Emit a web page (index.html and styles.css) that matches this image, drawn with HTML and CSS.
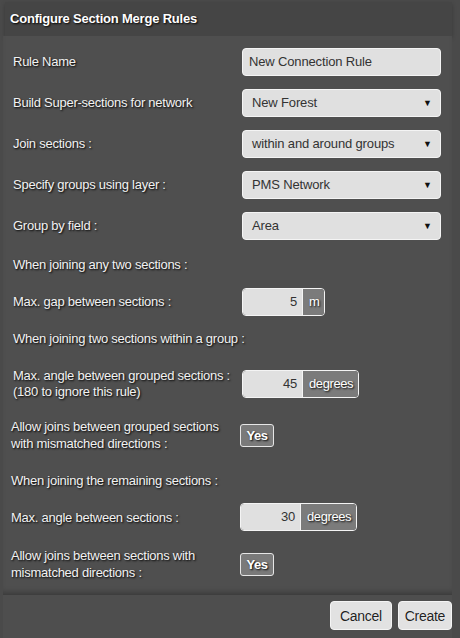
FILE: index.html
```html
<!DOCTYPE html>
<html>
<head>
<meta charset="utf-8">
<link rel="stylesheet" href="styles.css">
</head>
<body>
<div class="dialog">
  <div class="title">Configure Section Merge Rules</div>
  <div class="content">
    <div class="row r41">
      <div class="label">Rule Name</div>
      <div class="field text">New Connection Rule</div>
    </div>
    <div class="row r41">
      <div class="label">Build Super-sections for network</div>
      <div class="field select"><span>New Forest</span><span class="arrow">&#9660;</span></div>
    </div>
    <div class="row r41">
      <div class="label">Join sections :</div>
      <div class="field select"><span>within and around groups</span><span class="arrow">&#9660;</span></div>
    </div>
    <div class="row r41">
      <div class="label">Specify groups using layer :</div>
      <div class="field select"><span>PMS Network</span><span class="arrow">&#9660;</span></div>
    </div>
    <div class="row r41">
      <div class="label">Group by field :</div>
      <div class="field select"><span>Area</span><span class="arrow">&#9660;</span></div>
    </div>
    <div class="row r38">
      <div class="label">When joining any two sections :</div>
    </div>
    <div class="row r36">
      <div class="label">Max. gap between sections :</div>
      <div class="numbox"><span class="num">5</span><span class="unit">m</span></div>
    </div>
    <div class="row r38">
      <div class="label">When joining two sections within a group :</div>
    </div>
    <div class="row r52">
      <div class="label">Max. angle between grouped sections :<br>(180 to ignore this rule)</div>
      <div class="numbox"><span class="num">45</span><span class="unit">degrees</span></div>
    </div>
    <div class="row r50">
      <div class="label tight">Allow joins between grouped sections<br>with mismatched directions :</div>
      <div class="toggle">Yes</div>
    </div>
    <div class="row r40">
      <div class="label tight">When joining the remaining sections :</div>
    </div>
    <div class="row r34">
      <div class="label tight">Max. angle between sections :</div>
      <div class="numbox"><span class="num">30</span><span class="unit">degrees</span></div>
    </div>
    <div class="row r60">
      <div class="label tight">Allow joins between sections with<br>mismatched directions :</div>
      <div class="toggle">Yes</div>
    </div>
  </div>
  <div class="footer">
    <button class="btn btn-cancel">Cancel</button>
    <button class="btn">Create</button>
  </div>
</div>
</body>
</html>
```
FILE: styles.css
```css
html, body {
  margin: 0;
  padding: 0;
}
body {
  background: #4a4a4a;
  width: 460px;
  height: 638px;
  overflow: hidden;
  font-family: "Liberation Sans", Arial, sans-serif;
  font-size: 13px;
  color: #f2f2f2;
}
.dialog {
  margin-left: 3px;
  width: 449px;
  display: flex;
  flex-direction: column;
}
.title {
  margin: 2px 0 0 2px;
  height: 34px;
  line-height: 34px;
  padding-left: 5px;
  background: #454545;
  font-weight: bold;
  letter-spacing: -0.2px;
  color: #ffffff;
  text-shadow: 1px 1px 2px #000;
  box-shadow: 0 2px 4px rgba(0,0,0,0.25);
}
.content {
  background: #4f4f4f;
  padding-top: 5px;
  height: 559px;
  box-sizing: border-box;
  box-shadow: inset 0 -6px 6px -4px rgba(0,0,0,0.3);
}
.row {
  display: flex;
  align-items: center;
  padding-left: 10px;
}
.r41 { height: 41px; }
.r38 { height: 38px; }
.r36 { height: 36px; }
.r52 { height: 52px; }
.r50 { height: 50px; }
.r40 { height: 40px; }
.r34 { height: 34px; }
.r60 { height: 60px; }
.label {
  width: 229px;
  flex: none;
  white-space: nowrap;
  letter-spacing: -0.25px;
  line-height: 16px;
  text-shadow: 1px 1px 2px #000;
}
.label.tight {
  margin-left: -2px;
  line-height: 17px;
}
.field {
  width: 199px;
  height: 28px;
  box-sizing: border-box;
  background: #e0e0e0;
  border: 1px solid #f4f4f4;
  border-radius: 4px;
  color: #333;
  letter-spacing: -0.15px;
  display: flex;
  align-items: center;
}
.text { padding-left: 6px; }
.select {
  padding: 0 8px 0 9px;
  justify-content: space-between;
}
.arrow {
  font-size: 9px;
  color: #111;
  letter-spacing: 0;
}
.numbox {
  display: flex;
  height: 28px;
  box-sizing: border-box;
  border: 1px solid #f4f4f4;
  border-radius: 4px;
  overflow: hidden;
}
.num {
  width: 60px;
  background: #e0e0e0;
  color: #333;
  text-align: right;
  padding-right: 5px;
  box-sizing: border-box;
  line-height: 26px;
  border-right: 1px solid #f4f4f4;
  letter-spacing: -0.2px;
}
.unit {
  background: #7b7b7b;
  color: #fff;
  padding: 0 5px 0 6px;
  line-height: 26px;
  letter-spacing: -0.4px;
  text-shadow: 1px 1px 2px #000;
}
.toggle {
  width: 34px;
  height: 23px;
  box-sizing: border-box;
  background: #7a7a7a;
  border: 1px solid #e6e6e6;
  border-radius: 3px;
  color: #fff;
  font-weight: bold;
  text-align: center;
  line-height: 21px;
  letter-spacing: -0.4px;
  text-shadow: 1px 1px 2px #000;
}
.footer {
  height: 43px;
  display: flex;
  justify-content: flex-end;
  align-items: flex-start;
  gap: 6px;
  padding-top: 6px;
  box-sizing: border-box;
  background: #4e4e4e;
}
.btn {
  height: 29px;
  padding: 0 6px;
  background: #e2e2e2;
  border: 1px solid #f4f4f4;
  border-radius: 4px;
  font-family: "Liberation Sans", Arial, sans-serif;
  font-size: 14px;
  letter-spacing: -0.3px;
  color: #222;
  text-shadow: 0 0 1px #fff;
}
.btn-cancel {
  padding: 0 9px;
}
```
